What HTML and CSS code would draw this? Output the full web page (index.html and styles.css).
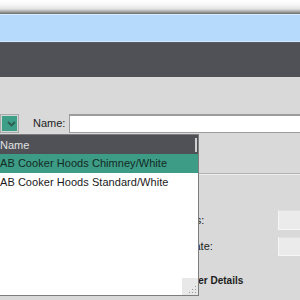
FILE: index.html
```html
<!DOCTYPE html>
<html>
<head>
<meta charset="utf-8">
<link rel="stylesheet" href="styles.css">
</head>
<body>
<div class="app">
  <div class="titlebar"></div>
  <div class="ribbon"></div>
  <div class="toolbar"></div>
  <div class="content">
    <div class="search-row">
      <div class="combo-btn">
        <svg width="9" height="6" viewBox="0 0 9 6"><path d="M1 1 L4.5 4.5 L8 1" fill="none" stroke="#2e5c50" stroke-width="1.8"/></svg>
      </div>
      <span class="label name-label">Name:</span>
      <div class="text-input"></div>
    </div>
    <div class="separator"></div>
    <div class="form">
      <span class="label">Stages:</span>
      <div class="field"></div>
      <span class="label">Estimate:</span>
      <div class="field field-short"></div>
    </div>
    <div class="section-title">Customer Details</div>
  </div>
  <div class="popup">
    <div class="popup-header">
      <span>Name</span>
      <span class="col-handle"></span>
    </div>
    <div class="popup-row selected">AB Cooker Hoods Chimney/White</div>
    <div class="popup-row">AB Cooker Hoods Standard/White</div>
    <div class="grip">
      <svg width="10" height="10" viewBox="0 0 10 10">
        <rect x="8" y="2" width="1" height="1" fill="#9a9a9a"/>
        <rect x="5" y="5" width="1" height="1" fill="#9a9a9a"/>
        <rect x="8" y="5" width="1" height="1" fill="#9a9a9a"/>
        <rect x="2" y="8" width="1" height="1" fill="#9a9a9a"/>
        <rect x="5" y="8" width="1" height="1" fill="#9a9a9a"/>
        <rect x="8" y="8" width="1" height="1" fill="#9a9a9a"/>
      </svg>
    </div>
  </div>
</div>
</body>
</html>
```
FILE: styles.css
```css
* { box-sizing: border-box; }
html, body {
  margin: 0;
  padding: 0;
  width: 300px;
  height: 300px;
  overflow: hidden;
  background: #d9d9d9;
  font-family: "Liberation Sans", Arial, sans-serif;
  font-size: 11px;
  color: #222;
}
.app {
  position: relative;
  width: 300px;
  height: 300px;
  overflow: hidden;
}
.titlebar {
  height: 14px;
  background: linear-gradient(#ffffff 0, #f6f6f6 5px, #e2e2e2 9px, #b4b4b4 11px, #858585 13px, #6a6a6a 14px);
}
.ribbon {
  height: 28px;
  background: #b6dafb;
  border-top: 1px solid #d6ebfd;
  border-bottom: 1px solid #cfe6fc;
}
.toolbar {
  height: 35px;
  background: #4f5157;
  border-top: 1px solid #5a5c62;
}
.content {
  padding-top: 37px;
}
.search-row {
  display: flex;
  align-items: center;
  height: 19px;
}
.combo-btn {
  width: 19px;
  height: 19px;
  background: #3f9e88;
  border: 1px solid #a9a9a9;
  box-shadow: inset 0 0 0 1px #cfd8d5;
  display: flex;
  align-items: center;
  justify-content: center;
  padding-left: 4px;
}
.label {
  color: #222;
  font-size: 11px;
  line-height: 13px;
  white-space: nowrap;
}
.name-label {
  margin-left: 14px;
  width: 36px;
  flex: none;
}
.text-input {
  flex: 1;
  height: 19px;
  margin-right: -10px;
  background: #fff;
  border: 1px solid #9c9c9c;
  border-top-width: 2px;
}
.separator {
  margin-top: 40px;
  height: 2px;
  border-top: 1px solid #b3b3b3;
  border-bottom: 1px solid #ececec;
}
.form {
  margin-top: 35px;
  padding-left: 167px;
  display: grid;
  grid-template-columns: 111px 1fr;
  grid-template-rows: 20px 19px;
  row-gap: 7px;
  align-items: center;
}
.field {
  height: 20px;
  margin-right: -20px;
  background: #ebebeb;
  border: 1px solid #f6f6f6;
  border-top-color: #e0e0e0;
}
.field-short {
  height: 19px;
}
.section-title {
  margin-top: 19px;
  padding-left: 161px;
  font-weight: bold;
  font-size: 10px;
  line-height: 12px;
  color: #1c1c1c;
}
.popup {
  position: absolute;
  left: -1px;
  top: 134px;
  width: 200px;
  height: 162px;
  background: #fff;
  border: 1px solid #7d7d7d;
  z-index: 2;
}
.popup-header {
  height: 19px;
  background: #4f5157;
  color: #e2e2e2;
  display: flex;
  align-items: center;
  justify-content: space-between;
  padding-left: 0;
  padding-right: 1px;
  font-size: 11px;
}
.col-handle {
  width: 2px;
  height: 14px;
  background: #cfcfcf;
}
.popup-row {
  height: 19px;
  line-height: 19px;
  padding-left: 0;
  white-space: nowrap;
  overflow: hidden;
  color: #1a1a1a;
  font-size: 11px;
  letter-spacing: 0.05px;
}
.popup-row.selected {
  background: #3d9c86;
  color: #142a24;
}
.grip {
  position: absolute;
  right: 0;
  bottom: 0;
  width: 16px;
  height: 17px;
  background: #e8e8e8;
  display: flex;
  align-items: flex-end;
  justify-content: flex-end;
  padding: 0 1px 1px 0;
}
```
